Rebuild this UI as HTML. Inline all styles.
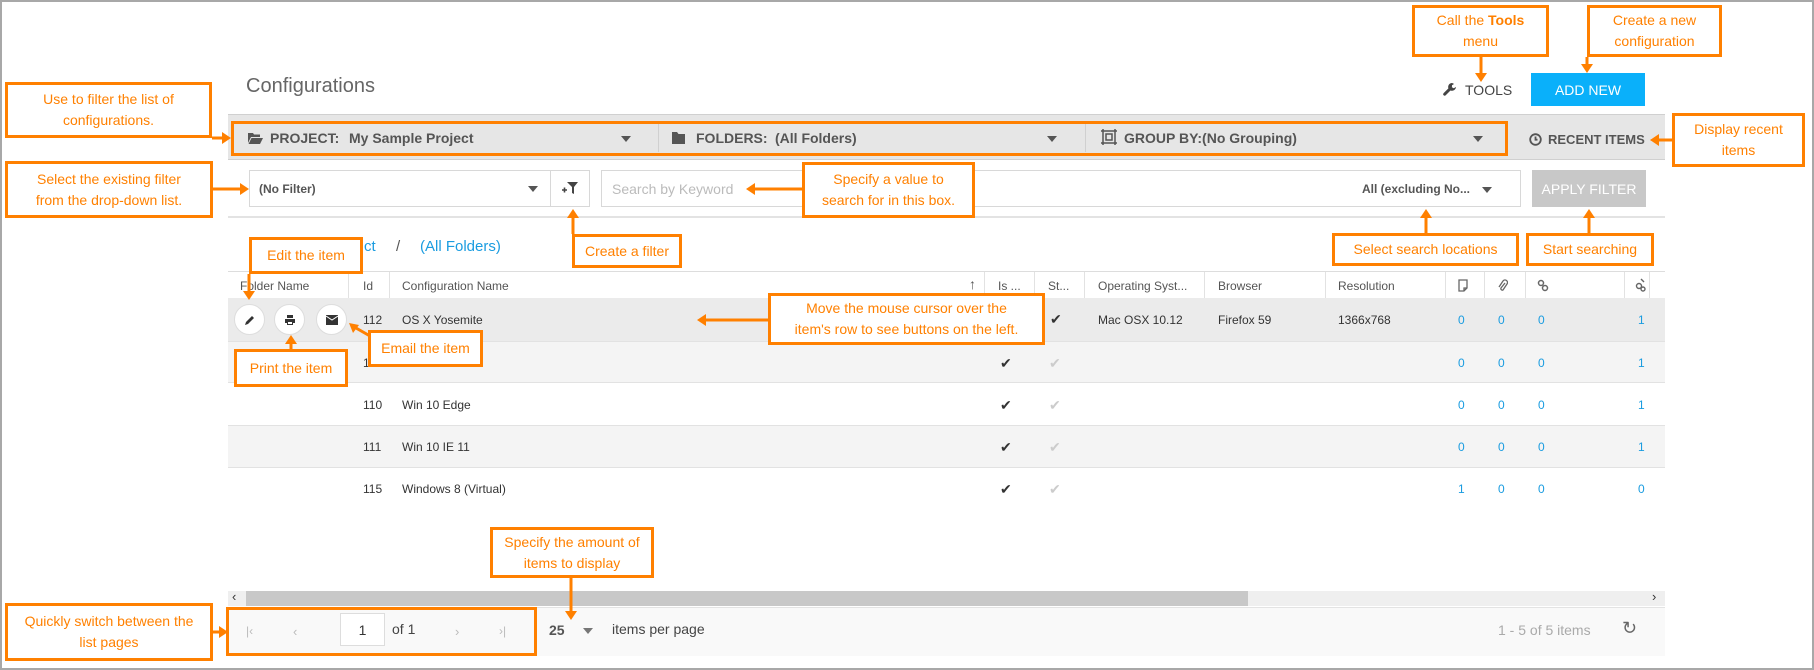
<!DOCTYPE html>
<html><head><meta charset="utf-8"><style>
*{margin:0;padding:0;box-sizing:border-box}
body{width:1814px;height:670px;position:relative;overflow:hidden;background:#fff;font-family:"Liberation Sans",Arial,sans-serif;color:#444}
.a{position:absolute;white-space:nowrap}
.frame{position:absolute;left:0;top:0;width:1814px;height:670px;border:2px solid #a8a8a8}
.ann{position:absolute;background:#fff;border:3px solid #ff8000;color:#ff8000;font-size:14px;line-height:21px;text-align:center;display:flex;align-items:center;justify-content:center;padding:0 2px;white-space:nowrap}
.hd{font-size:12px;color:#555;top:279px}
.vd{position:absolute;top:272px;width:1px;height:26px;background:#e2e2e2}
.row{position:absolute;left:228px;width:1437px;border-bottom:1px solid #e2e2e2}
.c{font-size:12px;color:#333}
.n{font-size:12px;color:#1a9ce0}
.caret{position:absolute;width:0;height:0;border-left:5px solid transparent;border-right:5px solid transparent;border-top:6px solid #555}
.circ{position:absolute;width:31px;height:31px;border-radius:50%;background:#fff;border:1px solid #ddd;display:flex;align-items:center;justify-content:center}
</style></head><body>
<div class="frame"></div>

<div class="a" style="left:246px;top:75px;font-size:20px;color:#666">Configurations</div>
<svg class="a" style="left:1442px;top:82px" width="16" height="16" viewBox="0 0 16 16"><path d="M10 1a4 4 0 0 0-3.6 5.4L1.5 11.3a1.5 1.5 0 0 0 2.1 2.1l4.9-4.9A4 4 0 0 0 14 5l-2.3 1.3-1.8-1 .1-2.1L12 2A4 4 0 0 0 10 1z" fill="#444"/></svg>
<div class="a" style="left:1465px;top:82px;font-size:14px;color:#444">TOOLS</div>
<div class="a" style="left:1531px;top:73px;width:114px;height:33px;background:#0ab0fa;color:#fff;font-size:14px;display:flex;align-items:center;justify-content:center">ADD NEW</div>

<div class="a" style="left:228px;top:114px;width:1437px;height:46px;background:#e6e6e6;border-top:1px solid #d0d0d0;border-bottom:1px solid #d0d0d0"></div>
<div class="a" style="left:231px;top:121px;width:1277px;height:35px;border:3px solid #ff8000"></div>
<svg class="a" style="left:248px;top:132px" width="15" height="12" viewBox="0 0 15 12"><path d="M0 1h5l1 1.5h6V5H3L0 11z M3.5 6H15l-3 6H0.5z" fill="#555"/></svg>
<div class="a" style="left:270px;top:130px;font-size:14px;font-weight:bold;color:#555">PROJECT:</div>
<div class="a" style="left:349px;top:130px;font-size:14px;font-weight:bold;color:#555">My Sample Project</div>
<div class="caret" style="left:621px;top:136px"></div>
<div class="a" style="left:658px;top:124px;width:1px;height:28px;background:#d0d0d0"></div>
<svg class="a" style="left:672px;top:131px" width="13" height="13" viewBox="0 0 13 13"><path d="M0 1h5l1.5 2H13v10H0z" fill="#555"/></svg>
<div class="a" style="left:696px;top:130px;font-size:14px;font-weight:bold;color:#555">FOLDERS:</div>
<div class="a" style="left:775px;top:130px;font-size:14px;font-weight:bold;color:#555">(All Folders)</div>
<div class="caret" style="left:1047px;top:136px"></div>
<div class="a" style="left:1085px;top:124px;width:1px;height:28px;background:#d0d0d0"></div>
<svg class="a" style="left:1101px;top:129px" width="16" height="16" viewBox="0 0 16 16" fill="none" stroke="#555" stroke-width="1.5"><rect x="2" y="2" width="12" height="12"/><rect x="5" y="5" width="6" height="6"/><path d="M0 2h2M14 2h2M0 14h2M14 14h2M2 0v2M14 0v2M2 14v2M14 14v2"/></svg>
<div class="a" style="left:1124px;top:130px;font-size:14px;font-weight:bold;color:#555">GROUP BY:(No Grouping)</div>
<div class="caret" style="left:1473px;top:136px"></div>
<svg class="a" style="left:1529px;top:133px" width="13" height="13" viewBox="0 0 13 13" fill="none" stroke="#555" stroke-width="1.8"><circle cx="6.5" cy="6.5" r="5.3"/><path d="M6.5 3.5v3.2h2"/></svg>
<div class="a" style="left:1548px;top:132px;font-size:13px;font-weight:bold;color:#555">RECENT ITEMS</div>

<div class="a" style="left:249px;top:170px;width:302px;height:37px;border:1px solid #d8d8d8;background:#fff"></div>
<div class="a" style="left:259px;top:182px;font-size:12px;font-weight:bold;color:#555">(No Filter)</div>
<div class="caret" style="left:528px;top:186px"></div>
<div class="a" style="left:550px;top:170px;width:40px;height:37px;border:1px solid #d8d8d8;background:#fff"></div>
<svg class="a" style="left:562px;top:181px" width="17" height="15" viewBox="0 0 17 15"><path d="M5 1h11L12 6v7l-2-1V6z" fill="#444"/><path d="M0 9h5M2.5 6.5v5" stroke="#444" stroke-width="1.6"/></svg>
<div class="a" style="left:601px;top:170px;width:920px;height:37px;border:1px solid #d8d8d8;background:#fff"></div>
<div class="a" style="left:612px;top:181px;font-size:14px;color:#bbb">Search by Keyword</div>
<div class="a" style="left:1362px;top:182px;font-size:12px;font-weight:bold;color:#555">All (excluding No...</div>
<div class="caret" style="left:1482px;top:187px"></div>
<div class="a" style="left:1532px;top:170px;width:114px;height:37px;background:#c8c8c8;color:#fff;font-size:14px;display:flex;align-items:center;justify-content:center">APPLY FILTER</div>
<div class="a" style="left:228px;top:216px;width:1437px;height:2px;background:#e3e3e3"></div>

<div class="a" style="left:364px;top:238px;font-size:15px;color:#1a9ce0">ct</div>
<div class="a" style="left:396px;top:238px;font-size:15px;color:#555">/</div>
<div class="a" style="left:420px;top:238px;font-size:15px;color:#1a9ce0">(All Folders)</div>

<div class="a" style="left:228px;top:271px;width:1437px;height:1px;background:#ddd"></div>
<div class="a hd" style="left:240px">Folder Name</div>
<div class="vd" style="left:348px"></div>
<div class="a hd" style="left:363px">Id</div>
<div class="vd" style="left:389px"></div>
<div class="a hd" style="left:402px">Configuration Name</div>
<div class="a hd" style="left:969px;top:276px;font-size:14px">↑</div>
<div class="vd" style="left:984px"></div>
<div class="a hd" style="left:998px">Is ...</div>
<div class="vd" style="left:1034px"></div>
<div class="a hd" style="left:1048px">St...</div>
<div class="vd" style="left:1084px"></div>
<div class="a hd" style="left:1098px">Operating Syst...</div>
<div class="vd" style="left:1204px"></div>
<div class="a hd" style="left:1218px">Browser</div>
<div class="vd" style="left:1325px"></div>
<div class="a hd" style="left:1338px">Resolution</div>
<div class="vd" style="left:1445px"></div>
<svg class="a" style="left:1458px;top:279px" width="10" height="13" viewBox="0 0 10 13" fill="none" stroke="#666" stroke-width="1.3"><path d="M1 1h8v8l-3 3H1z M6 12V9h3"/></svg>
<div class="vd" style="left:1484px"></div>
<svg class="a" style="left:1498px;top:279px" width="10" height="13" viewBox="0 0 10 13" fill="none" stroke="#666" stroke-width="1.3"><path d="M7 4L3 9a1.5 1.5 0 0 0 2 2l4-6a2.5 2.5 0 0 0-4-3L1 8"/></svg>
<div class="vd" style="left:1525px"></div>
<svg class="a" style="left:1537px;top:279px" width="12" height="13" viewBox="0 0 12 13" fill="none" stroke="#666" stroke-width="1.5"><circle cx="4" cy="4" r="2.5"/><circle cx="8" cy="9" r="2.5"/></svg>
<div class="vd" style="left:1624px"></div>
<svg class="a" style="left:1635px;top:278px" width="12" height="14" viewBox="0 0 12 14" fill="none" stroke="#666" stroke-width="1.4"><circle cx="4" cy="8" r="2.5"/><circle cx="8" cy="11" r="2"/><path d="M6 1l3 3"/></svg>
<div class="vd" style="left:1649px"></div>

<div class="row" style="top:298px;height:44px;background:#ebebeb"></div>
<div class="row" style="top:342px;height:41px;background:#f4f4f4"></div>
<div class="row" style="top:383px;height:43px;background:#fff"></div>
<div class="row" style="top:426px;height:42px;background:#f4f4f4"></div>
<div class="row" style="top:468px;height:42px;background:#fff;border-bottom:none"></div>

<div class="circ" style="left:234px;top:304px"><svg width="12" height="12" viewBox="0 0 12 12"><path d="M1 11l1-3 6-6 2 2-6 6z" fill="#333"/></svg></div>
<div class="circ" style="left:274px;top:304px"><svg width="12" height="12" viewBox="0 0 12 12"><path d="M3 1h6v3H3z M1 5h10v4H9v2H3V9H1z" fill="#333"/><rect x="4" y="8" width="4" height="2" fill="#fff"/></svg></div>
<div class="circ" style="left:316px;top:304px"><svg width="12" height="10" viewBox="0 0 12 10"><path d="M0 0h12v10H0z" fill="#333"/><path d="M0 1l6 4 6-4" stroke="#fff" stroke-width="1" fill="none"/></svg></div>

<div class="a c" style="left:363px;top:313px">112</div><div class="a c" style="left:402px;top:313px">OS X Yosemite</div>
<div class="a c" style="left:1050px;top:311px;font-size:14px;color:#333">✔</div>
<div class="a c" style="left:1098px;top:313px">Mac OSX 10.12</div><div class="a c" style="left:1218px;top:313px">Firefox 59</div><div class="a c" style="left:1338px;top:313px">1366x768</div>
<div class="a n" style="left:1458px;top:313px">0</div><div class="a n" style="left:1498px;top:313px">0</div><div class="a n" style="left:1538px;top:313px">0</div><div class="a n" style="left:1638px;top:313px">1</div>

<div class="a c" style="left:363px;top:356px">113</div>
<div class="a" style="left:1000px;top:355px;font-size:14px;color:#333">✔</div><div class="a" style="left:1049px;top:355px;font-size:14px;color:#ccc">✔</div>
<div class="a n" style="left:1458px;top:356px">0</div><div class="a n" style="left:1498px;top:356px">0</div><div class="a n" style="left:1538px;top:356px">0</div><div class="a n" style="left:1638px;top:356px">1</div>

<div class="a c" style="left:363px;top:398px">110</div><div class="a c" style="left:402px;top:398px">Win 10 Edge</div>
<div class="a" style="left:1000px;top:397px;font-size:14px;color:#333">✔</div><div class="a" style="left:1049px;top:397px;font-size:14px;color:#ccc">✔</div>
<div class="a n" style="left:1458px;top:398px">0</div><div class="a n" style="left:1498px;top:398px">0</div><div class="a n" style="left:1538px;top:398px">0</div><div class="a n" style="left:1638px;top:398px">1</div>

<div class="a c" style="left:363px;top:440px">111</div><div class="a c" style="left:402px;top:440px">Win 10 IE 11</div>
<div class="a" style="left:1000px;top:439px;font-size:14px;color:#333">✔</div><div class="a" style="left:1049px;top:439px;font-size:14px;color:#ccc">✔</div>
<div class="a n" style="left:1458px;top:440px">0</div><div class="a n" style="left:1498px;top:440px">0</div><div class="a n" style="left:1538px;top:440px">0</div><div class="a n" style="left:1638px;top:440px">1</div>

<div class="a c" style="left:363px;top:482px">115</div><div class="a c" style="left:402px;top:482px">Windows 8 (Virtual)</div>
<div class="a" style="left:1000px;top:481px;font-size:14px;color:#333">✔</div><div class="a" style="left:1049px;top:481px;font-size:14px;color:#ccc">✔</div>
<div class="a n" style="left:1458px;top:482px">1</div><div class="a n" style="left:1498px;top:482px">0</div><div class="a n" style="left:1538px;top:482px">0</div><div class="a n" style="left:1638px;top:482px">0</div>

<div class="a" style="left:228px;top:591px;width:1437px;height:15px;background:#efefef"></div>
<div class="a" style="left:246px;top:591px;width:1002px;height:15px;background:#c8c8c8"></div>
<div class="a" style="left:232px;top:589px;font-size:13px;color:#333">‹</div>
<div class="a" style="left:1652px;top:589px;font-size:13px;color:#333">›</div>

<div class="a" style="left:228px;top:607px;width:1437px;height:49px;background:#f9f9f9;border-top:1px solid #e3e3e3"></div>
<div class="a" style="left:246px;top:624px;font-size:12px;color:#bbb">|‹</div>
<div class="a" style="left:293px;top:624px;font-size:13px;color:#bbb">‹</div>
<div class="a" style="left:340px;top:613px;width:45px;height:33px;background:#fff;border:1px solid #ddd;font-size:14px;color:#333;display:flex;align-items:center;justify-content:center">1</div>
<div class="a" style="left:392px;top:621px;font-size:14px;color:#444">of 1</div>
<div class="a" style="left:455px;top:624px;font-size:13px;color:#bbb">›</div>
<div class="a" style="left:499px;top:624px;font-size:12px;color:#bbb">›|</div>
<div class="a" style="left:549px;top:622px;font-size:14px;font-weight:bold;color:#555">25</div>
<div class="caret" style="left:583px;top:628px;border-top-color:#777"></div>
<div class="a" style="left:612px;top:621px;font-size:14px;color:#444">items per page</div>
<div class="a" style="left:1498px;top:622px;font-size:14px;color:#aaa">1 - 5 of 5 items</div>
<div class="a" style="left:1622px;top:618px;font-size:18px;color:#666">↻</div>

<div class="a" style="left:226px;top:607px;width:311px;height:49px;border:3px solid #ff8000"></div>

<div class="ann" style="left:5px;top:82px;width:207px;height:56px"><span>Use to filter the list of<br>configurations.</span></div>
<div class="ann" style="left:5px;top:161px;width:208px;height:57px"><span>Select the existing filter<br>from the drop-down list.</span></div>
<div class="ann" style="left:802px;top:162px;width:173px;height:56px"><span>Specify a value to<br>search for in this box.</span></div>
<div class="ann" style="left:572px;top:234px;width:110px;height:34px"><span>Create a filter</span></div>
<div class="ann" style="left:249px;top:237px;width:114px;height:37px"><span>Edit the item</span></div>
<div class="ann" style="left:1412px;top:5px;width:137px;height:52px"><span>Call the <b>Tools</b><br>menu</span></div>
<div class="ann" style="left:1587px;top:5px;width:135px;height:52px"><span>Create a new<br>configuration</span></div>
<div class="ann" style="left:1672px;top:113px;width:133px;height:54px"><span>Display recent<br>items</span></div>
<div class="ann" style="left:1332px;top:233px;width:187px;height:33px"><span>Select search locations</span></div>
<div class="ann" style="left:1526px;top:233px;width:128px;height:33px"><span>Start searching</span></div>
<div class="ann" style="left:768px;top:293px;width:277px;height:52px"><span>Move the mouse cursor over the<br>item's row to see buttons on the left.</span></div>
<div class="ann" style="left:234px;top:349px;width:114px;height:38px"><span>Print the item</span></div>
<div class="ann" style="left:368px;top:330px;width:115px;height:37px"><span>Email the item</span></div>
<div class="ann" style="left:490px;top:527px;width:164px;height:51px"><span>Specify the amount of<br>items to display</span></div>
<div class="ann" style="left:5px;top:603px;width:208px;height:58px"><span>Quickly switch between the<br>list pages</span></div>

<svg class="a" style="left:0;top:0" width="1814" height="670">
<g stroke="#ff8000" stroke-width="3" fill="#ff8000">
<line x1="212" y1="138" x2="224" y2="138"/><path d="M231 138l-9-6v12z" stroke="none"/>
<line x1="213" y1="189" x2="241" y2="189"/><path d="M249 189l-9-6v12z" stroke="none"/>
<line x1="802" y1="189" x2="754" y2="189"/><path d="M746 189l9-6v12z" stroke="none"/>
<line x1="573" y1="234" x2="573" y2="217"/><path d="M573 209l-6 9h12z" stroke="none"/>
<line x1="249" y1="274" x2="249" y2="292"/><path d="M249 300l-6-9h12z" stroke="none"/>
<line x1="1481" y1="57" x2="1481" y2="74"/><path d="M1481 82l-6-9h12z" stroke="none"/>
<line x1="1587" y1="57" x2="1587" y2="65"/><path d="M1587 73l-6-9h12z" stroke="none"/>
<line x1="1672" y1="140" x2="1658" y2="140"/><path d="M1650 140l9-6v12z" stroke="none"/>
<line x1="1426" y1="233" x2="1426" y2="217"/><path d="M1426 209l-6 9h12z" stroke="none"/>
<line x1="1589" y1="233" x2="1589" y2="217"/><path d="M1589 209l-6 9h12z" stroke="none"/>
<line x1="768" y1="320" x2="705" y2="320"/><path d="M697 320l9-6v12z" stroke="none"/>
<line x1="291" y1="349" x2="291" y2="343"/><path d="M291 335l-6 9h12z" stroke="none"/>
<line x1="370" y1="336" x2="356" y2="328"/><path d="M349 323l4 10 6-8z" stroke="none"/>
<line x1="571" y1="578" x2="571" y2="612"/><path d="M571 620l-6-9h12z" stroke="none"/>
<line x1="213" y1="632" x2="220" y2="632"/><path d="M228 632l-9-6v12z" stroke="none"/>
</g></svg>
</body></html>
